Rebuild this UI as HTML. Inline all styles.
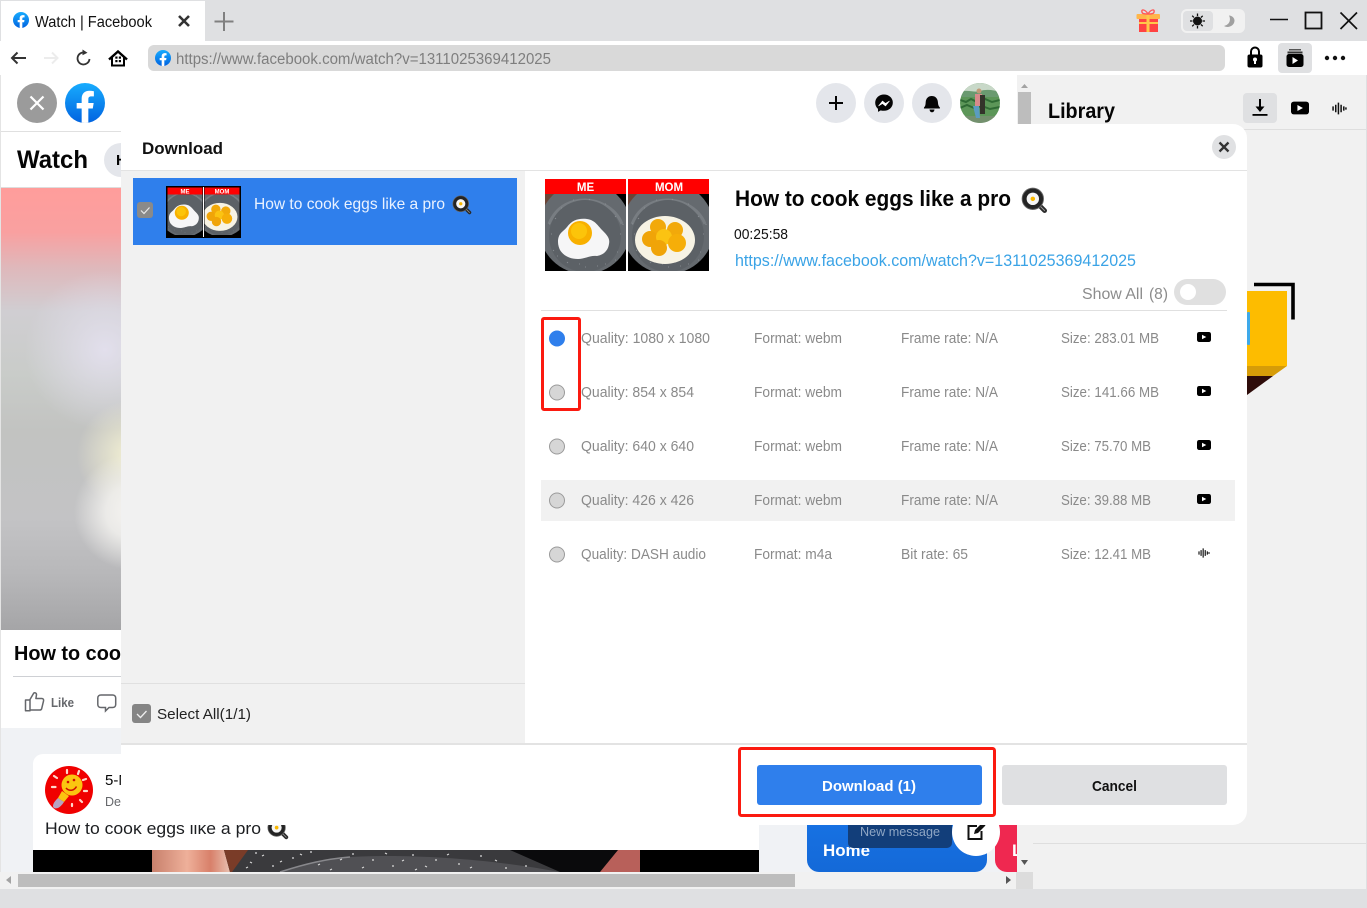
<!DOCTYPE html>
<html><head><meta charset="utf-8"><title>Watch | Facebook</title>
<style>
html,body{margin:0;padding:0;background:#fff;overflow:hidden}
svg{display:block;font-family:"Liberation Sans",sans-serif}
</style></head><body>
<svg xmlns="http://www.w3.org/2000/svg" width="1367" height="908" viewBox="0 0 1367 908">
<defs>
<linearGradient id="fb" x1="0" y1="0" x2="0" y2="1"><stop offset="0" stop-color="#18acfe"/><stop offset="1" stop-color="#0163e0"/></linearGradient>
<linearGradient id="vid" x1="0" y1="0" x2="0" y2="1">
<stop offset="0" stop-color="#ff9d9b"/><stop offset=".1" stop-color="#f9a0a0"/><stop offset=".18" stop-color="#dfb8bb"/><stop offset=".28" stop-color="#d0ced2"/><stop offset=".42" stop-color="#c9ccc9"/><stop offset=".55" stop-color="#c2c3c1"/><stop offset=".75" stop-color="#c3c3c5"/><stop offset=".87" stop-color="#b8b8ba"/><stop offset="1" stop-color="#a5a5a7"/>
</linearGradient>
<radialGradient id="lav" gradientUnits="userSpaceOnUse" cx="105" cy="350" r="80"><stop offset="0" stop-color="#e2dfec"/><stop offset="1" stop-color="#e2dfec" stop-opacity="0"/></radialGradient>
<radialGradient id="cream" gradientUnits="userSpaceOnUse" cx="132" cy="455" r="55"><stop offset="0" stop-color="#f5f2d4"/><stop offset="1" stop-color="#f5f2d4" stop-opacity="0"/></radialGradient>
<radialGradient id="whitish" gradientUnits="userSpaceOnUse" cx="132" cy="512" r="58"><stop offset="0" stop-color="#f6f4f1"/><stop offset=".45" stop-color="#f2f1ee" stop-opacity=".85"/><stop offset="1" stop-color="#f2f1ee" stop-opacity="0"/></radialGradient>
<linearGradient id="hand" x1="0" y1="0" x2="1" y2="0"><stop offset="0" stop-color="#c8806c"/><stop offset=".45" stop-color="#eeb09a"/><stop offset=".75" stop-color="#d8806a"/><stop offset="1" stop-color="#e8c0b0"/></linearGradient>
<linearGradient id="hbtn" x1="0" y1="0" x2="0" y2="1"><stop offset="0" stop-color="#1b7cf0"/><stop offset="1" stop-color="#1469d8"/></linearGradient>

<symbol id="pan" viewBox="0 0 24 24">
<path d="M15 15l6 6" stroke="#2a2a2a" stroke-width="4.200" stroke-linecap="round"/>
<path d="M17 17l4 4" stroke="#999" stroke-width=".8" stroke-linecap="round"/>
<circle cx="10.500" cy="10.500" r="9.500" fill="#242424" stroke="#666" stroke-width=".8"/>
<circle cx="10.500" cy="10.500" r="5.500" fill="#f6f6f6"/>
<circle cx="10.500" cy="10.500" r="2" fill="#f9b800"/>
</symbol>

<symbol id="play" viewBox="0 0 14 10">
<rect width="14" height="10" rx="2.200" fill="#000"/><path d="M5 2.700l4.300 2.300L5 7.300z" fill="#fff"/>
</symbol>

<symbol id="wave" viewBox="0 0 14 12">
<path d="M1 4v4M3.500 2.500v7M6 .5v11M8.500 2.500v7M11 4v4M13 5v2" stroke="#111" stroke-width="1.400" fill="none"/>
</symbol>

<symbol id="fblogo" viewBox="0 0 36 36">
<circle cx="18" cy="18" r="18" fill="url(#fb)"/>
<path d="M25 23l.8-5H21v-3.500c0-1.400.5-2.500 2.700-2.500H26V7.400c-1.300-.2-2.700-.4-4-.4-4.100 0-7 2.500-7 7v4h-4.500v5H15v12.700c1 .2 2 .3 3 .3s2-.1 3-.3V23h4z" fill="#fff"/>
</symbol>

<symbol id="specks" viewBox="0 0 81 77">
<path d="M6 40l1 0M10 24l1 1M8 56l1 1M16 14l1 0M28 6l1 0M44 5l1 1M60 10l1 0M70 22l1 1M75 40l1 0M72 58l1 0M60 70l1 0M40 73l1 0M22 68l1 1M12 62l1 0M70 66l1 0M4 30l1 0M78 30l0 1M34 70l1 0M52 72l1 0" stroke="#8f9499" stroke-width=".8" fill="none"/>
</symbol>

<symbol id="egg1" viewBox="0 0 81 77">
<rect width="81" height="77" fill="#000"/>
<path d="M0 0h16L0 12z" fill="#6b4436"/>
<circle cx="40" cy="34" r="46" fill="#656a6f"/>
<path d="M4 30c8-20 25-24 36-24s30 6 37 24" fill="none" stroke="#868b90" stroke-width="3" opacity=".6"/>
<circle cx="40" cy="42" r="36" fill="#5c6166"/>
<use href="#specks" width="81" height="77"/>
<path d="M13 48c0-9 5-10 9-15 5-7 12-9 20-8 8 1 11 7 16 12 5 5 7 8 6 13-1 7-6 11-12 12-7-1-12 3-19 3-9 0-15-4-18-9-1-2-2-5-2-8z" fill="#f6f6f7"/>
<circle cx="35" cy="39" r="12" fill="#f8b000"/>
<circle cx="34" cy="37" r="8" fill="#fcc40a"/>
</symbol>

<symbol id="egg2" viewBox="0 0 81 77">
<rect width="81" height="77" fill="#000"/>
<path d="M0 0h16L0 12z" fill="#6b4436"/>
<circle cx="40" cy="34" r="46" fill="#656a6f"/>
<path d="M4 30c8-20 25-24 36-24s30 6 37 24" fill="none" stroke="#868b90" stroke-width="3" opacity=".6"/>
<circle cx="40" cy="42" r="36" fill="#5c6166"/>
<use href="#specks" width="81" height="77"/>
<ellipse cx="37" cy="46" rx="30" ry="24" fill="#f7f3e4"/>
<circle cx="30" cy="33" r="8" fill="#f2a90a"/><circle cx="47" cy="36" r="8" fill="#f2a90a"/>
<circle cx="22" cy="45" r="8" fill="#f0a408"/><circle cx="36" cy="43" r="8" fill="#fbc312"/>
<circle cx="49" cy="49" r="9" fill="#f6ae08"/><circle cx="31" cy="54" r="8" fill="#f0a408"/>
</symbol>

<clipPath id="pageclip"><rect x="1" y="75" width="1016" height="797"/></clipPath>
<clipPath id="avclip"><circle cx="980" cy="103" r="20"/></clipPath>
</defs>

<!-- chrome -->
<rect width="1367" height="908" fill="#dfe0e2"/>
<rect x="1" y="1" width="204" height="40" fill="#fff"/>
<rect y="41" width="1367" height="34" fill="#fff"/>
<use href="#fblogo" x="13" y="12" width="16" height="16"/>
<text x="35" y="27" font-size="15.500" fill="#111" textLength="117" lengthAdjust="spacingAndGlyphs">Watch | Facebook</text>
<path d="M179 16l10 10M189 16l-10 10" stroke="#333" stroke-width="2.600"/>
<path d="M224 12v19M214.500 21.500h19" stroke="#808080" stroke-width="2"/>
<!-- nav icons -->
<path d="M26 58H12M17.500 52.500L12 58l5.500 5.500" fill="none" stroke="#333" stroke-width="2"/>
<path d="M57.500 58H44M52 52.500l5.500 5.500-5.500 5.500" fill="none" stroke="#ececec" stroke-width="2"/>
<path d="M85.500 52.800a6 6 0 1 0 4 6.200" fill="none" stroke="#333" stroke-width="1.800"/><path d="M82.500 49.500l5 3.300-5 2.500z" fill="#333"/>
<path d="M109 59.500l9-8 9 8" fill="none" stroke="#000" stroke-width="2.400"/>
<path d="M112 57.500V65.500h12v-8" fill="none" stroke="#000" stroke-width="2"/>
<rect x="115.300" y="56.500" width="2.200" height="2.200" fill="#000"/><rect x="118.800" y="56.500" width="2.200" height="2.200" fill="#000"/><rect x="115.300" y="60" width="2.200" height="2.200" fill="#000"/><rect x="118.800" y="60" width="2.200" height="2.200" fill="#000"/>
<rect x="148" y="45" width="1077" height="26" rx="6" fill="#d9d9d9"/>
<use href="#fblogo" x="155" y="50" width="16" height="16"/>
<text x="176" y="64" font-size="15.500" fill="#7e7e7e" textLength="375" lengthAdjust="spacingAndGlyphs">https://www.facebook.com/watch?v=1311025369412025</text>
<!-- gift -->
<rect x="1139" y="17" width="19" height="15" fill="#ff4343"/>
<rect x="1136.500" y="14" width="23.500" height="5" rx="1" fill="#ffb64a"/>
<rect x="1146.500" y="14" width="3" height="18" fill="#ffc84a"/>
<rect x="1139" y="22" width="19" height="2" fill="#ffc84a"/>
<path d="M1148 14c-3-5-7-5-6-2 0 2 3 2 6 2zM1148 14c3-5 7-5 6-2 0 2-3 2-6 2z" fill="none" stroke="#ff5a5a" stroke-width="1.400"/>
<!-- theme switch -->
<rect x="1181" y="9" width="64" height="24" rx="6" fill="#f1f1f1"/>
<rect x="1183" y="11" width="30" height="20" rx="4" fill="#dfe0e2"/>
<circle cx="1197.500" cy="21" r="4.500" fill="#111"/>
<path d="M1197.500 13.500v2.500M1197.500 26v2.500M1190 21h2.500M1202.500 21h2.500M1192.200 15.700l1.700 1.700M1201 24.500l1.700 1.700M1192.200 26.300l1.700-1.700M1201 17.500l1.700-1.700" stroke="#111" stroke-width="1.300"/>
<path d="M1229 15.500c2 4 1 9-5 10.500 4 2.500 10 0 10.500-5 .2-3-2.500-5.500-5.500-5.500z" fill="#a0a0a0"/>
<!-- window controls -->
<path d="M1270 19.500h18" stroke="#111" stroke-width="1.600"/>
<rect x="1305.500" y="12.500" width="16" height="16" fill="none" stroke="#111" stroke-width="1.800"/>
<path d="M1340.500 12.500l16.500 16.500M1357 12.500l-16.500 16.500" stroke="#111" stroke-width="1.700"/>
<!-- right toolbar -->
<path d="M1251 55v-3.500a4 4 0 0 1 8 0V55" fill="none" stroke="#000" stroke-width="2"/>
<rect x="1247.500" y="54.500" width="15" height="13" rx="2" fill="#000"/>
<circle cx="1255" cy="59.500" r="2" fill="#fff"/><rect x="1254" y="60" width="2" height="4" fill="#fff"/>
<rect x="1278" y="43" width="34" height="30" rx="4" fill="#dfe0e2"/>
<rect x="1289" y="49" width="12" height="1.500" fill="#555"/>
<rect x="1287.500" y="51.500" width="15" height="2" fill="#333"/>
<rect x="1286.500" y="54" width="17" height="13" rx="2.500" fill="#000"/>
<path d="M1292.500 57l5.500 3.500-5.500 3.500z" fill="#fff"/>
<circle cx="1327" cy="58" r="2.200" fill="#111"/><circle cx="1335" cy="58" r="2.200" fill="#111"/><circle cx="1343" cy="58" r="2.200" fill="#111"/>

<!-- page -->
<rect x="1" y="75" width="1016" height="797" fill="#fff"/>
<g clip-path="url(#pageclip)">
<rect x="1" y="131" width="1016" height="1" fill="#e0e0e0"/>
<circle cx="37" cy="103" r="20" fill="#9b9b9b"/>
<path d="M30.500 96.500l13 13M43.500 96.500l-13 13" stroke="#fff" stroke-width="2.200"/>
<use href="#fblogo" x="65" y="83" width="40" height="40"/>
<circle cx="836" cy="103" r="20" fill="#e4e6eb"/>
<path d="M836 96v14M829 103h14" stroke="#050505" stroke-width="2"/>
<circle cx="884" cy="103" r="20" fill="#e4e6eb"/>
<path d="M884 94.500c-5 0-8.800 3.600-8.800 8.300 0 2.500 1 4.600 2.800 6.100v3l2.800-1.500c1 .3 2 .4 3.200.4 5 0 8.800-3.600 8.800-8.200s-3.800-8.100-8.800-8.100z" fill="#050505"/>
<path d="M878.500 106l4-5 3 2.500 4-2.500-4 5-3-2.500z" fill="#fff" stroke="#fff" stroke-width=".6"/>
<circle cx="932" cy="103" r="20" fill="#e4e6eb"/>
<path d="M924 107.500c1.500-1.500 1.500-3 1.700-5.500.3-3.800 2.800-6 6-6 3.500 0 5.900 2.300 6.200 6 .2 2.500.5 4 2 5.500v1h-16z" fill="#050505"/><path d="M929.500 109.500h5c-.3 2-1.300 2.800-2.500 2.800s-2.200-.8-2.500-2.800z" fill="#050505"/>
<g clip-path="url(#avclip)">
<rect x="960" y="83" width="40" height="40" fill="#5c9658"/>
<rect x="960" y="83" width="40" height="9" fill="#c8d8c8"/>
<path d="M960 92c8-3 14 1 20-1s14-1 20 1v5h-40z" fill="#6a9a70"/>
<path d="M960 100l6 2 5-3 6 3 8-3 7 3 8-2M960 108l7-3 7 3 8-2 8 3 10-2" fill="none" stroke="#2f6a34" stroke-width="2"/>
<path d="M964 116h32v7h-32z" fill="#74906e"/>
<circle cx="979" cy="91" r="2.500" fill="#c09a78"/><rect x="975" y="94" width="7" height="12" fill="#d88a8a"/><rect x="980" y="95" width="5" height="19" fill="#33332a"/><path d="M973 106l3 12h4l-1-12z" fill="#5a9cc0"/>
</g>

<text x="17" y="168" font-size="25" font-weight="bold" fill="#050505" textLength="71" lengthAdjust="spacingAndGlyphs">Watch</text>
<rect x="104" y="143" width="60" height="34" rx="17" fill="#e4e6eb"/>
<text x="116" y="165" font-size="15" font-weight="bold" fill="#050505">H</text>
<rect x="1" y="187" width="120" height="1" fill="#ddd"/>
<rect x="1" y="188" width="120" height="442" fill="url(#vid)"/>
<rect x="1" y="188" width="120" height="442" fill="url(#lav)"/>
<rect x="1" y="188" width="120" height="442" fill="url(#cream)"/>
<rect x="1" y="188" width="120" height="442" fill="url(#whitish)"/>
<text x="14" y="660" font-size="20.500" font-weight="bold" fill="#050505" textLength="118" lengthAdjust="spacingAndGlyphs">How to cook</text>
<rect x="13" y="676" width="300" height="1" fill="#ced0d4"/>
<path d="M30 699.500l3.500-6c.6-1.200 3-1 3 1.200l-.6 3.800h5.800c1.600 0 2.200 1.200 1.800 2.600l-1.800 7.500c-.3 1-1 1.400-2 1.400H30zM25.500 700h4.500v10.800h-4.500z" fill="none" stroke="#65676b" stroke-width="1.500" stroke-linejoin="round"/>
<text x="51" y="707" font-size="12.500" font-weight="bold" fill="#65676b" textLength="23" lengthAdjust="spacingAndGlyphs">Like</text>
<path d="M101 695h11.500c2 0 3.200 1.200 3.200 3v6.500c0 1.800-1.200 3-3.200 3h-3.500l-3.500 3.500v-3.500h-4.500c-2 0-3.200-1.200-3.200-3V698c0-1.800 1.200-3 3.200-3z" fill="none" stroke="#65676b" stroke-width="1.500"/>
<rect x="1" y="728" width="1016" height="144" fill="#f0f2f5"/>
<path d="M33 872V764a10 10 0 0 1 10-10H759V872z" fill="#fff"/>
<circle cx="69" cy="790" r="24" fill="#f00000"/>
<g stroke="#ffd8cc" stroke-width="2.200" stroke-linecap="round"><path d="M52 787h3.500M54 776l3 2M67 770v3M79 771l-1 3M86 779l-3 1M87 791h-3M82 802l-2-2M72 806v-2"/></g>
<path d="M62 791l-4 7 6 4 5-6z" fill="#fbc510"/>
<circle cx="72" cy="785" r="10.500" fill="#fbc510"/>
<path d="M53 806c0-3 3-6 5-8l6 4c-2 3-4 5-6 6-3 1-5 0-5-2z" fill="#b7a3c0"/>
<path d="M66 788c3 3.500 8 3 10.500-1.500" fill="none" stroke="#d01000" stroke-width="1.500"/><circle cx="68" cy="782" r="1.300" fill="#d01000"/><circle cx="74" cy="780" r="1.300" fill="#d01000"/>
<text x="105" y="785" font-size="15" fill="#050505">5-Minute</text>
<text x="105" y="806" font-size="12.500" fill="#65676b">December</text>
<text x="45" y="834" font-size="17" fill="#1c1e21" textLength="216" lengthAdjust="spacingAndGlyphs">How to cook eggs like a pro</text>
<use href="#pan" x="267" y="818" width="22" height="22"/>
<rect x="33" y="850" width="726" height="22" fill="#000"/>
<rect x="152" y="850" width="488" height="22" fill="#0a0a0c"/>
<path d="M152 850h72l6 22h-78z" fill="url(#hand)"/>
<path d="M224 850h28l-18 22h-4z" fill="#7a3c28"/>
<path d="M232 872l16-22h262l50 22z" fill="#3a3a3d"/>
<path d="M280 872c25-8 45-13 70-15 50-3 130 0 210 15z" fill="#505054"/>
<path d="M280 872c25-8 45-13 70-15" fill="none" stroke="#88888c" stroke-width="1.600"/>
<path d="M600 872l18-22h22v22z" fill="#b8605a"/>
<path d="M246 868l2-1M262 856l2-1M280 862l2-1M300 854l2 1M318 865l2-1M340 860l2-1M362 868l2-1M385 853l2 1M402 861l2-1M425 866l2 1M447 855l2-1M470 868l2-1M495 860l2 1M250 862l2 1M330 870l2-1M415 870l2-1M255 853l2 0M272 866l2 0M292 858l2 0M310 852l2 0M352 854l2 0M372 860l2 0M392 866l2 0M412 855l2 0M435 860l2 0M458 864l2 0M480 856l2 0M505 868l2 0M525 866l2 0" stroke="#d8d8d8" stroke-width="1.200"/>
<!-- home cards -->
<path d="M807 760h180v100a12 12 0 0 1-12 12H819a12 12 0 0 1-12-12z" fill="url(#hbtn)"/>
<text x="823" y="856" font-size="17" font-weight="bold" fill="#fff" textLength="47" lengthAdjust="spacingAndGlyphs">Home</text>
<path d="M995 760h22v112h-10a12 12 0 0 1-12-12z" fill="#ef2850"/>
<text x="1012" y="856" font-size="17" font-weight="bold" fill="#fff">L</text>
<rect x="848" y="790" width="104" height="58" rx="5" fill="#123e7a"/>
<text x="860" y="836" font-size="13" fill="#8fa6c4" textLength="80" lengthAdjust="spacingAndGlyphs">New message</text>
<circle cx="976" cy="832" r="24" fill="#fff"/>
<path d="M977 826h-8.500v13h13v-8" fill="none" stroke="#111" stroke-width="2"/>
<path d="M974 834l1-4 7.500-7.500 3 3L978 833z" fill="#111"/>
</g>
<!-- page scrollbars -->
<rect x="0" y="872" width="1017" height="17" fill="#f1f1f1"/>
<rect x="18" y="874" width="777" height="13" fill="#bdbdbd"/>
<path d="M11 876v8l-5-4z" fill="#a3a3a3"/>
<path d="M1006 876v8l5-4z" fill="#555"/>
<!-- sidebar -->
<rect x="1017" y="75" width="350" height="814" fill="#f1f1f1"/>
<rect x="1366" y="75" width="1" height="814" fill="#dfe0e2"/>
<rect x="1016" y="872" width="17" height="17" fill="#dcdcdc"/>
<rect x="1018" y="92" width="13" height="60" fill="#bdbdbd"/>
<path d="M1021 88l3.500-4 3.500 4z" fill="#a3a3a3"/>
<path d="M1021 860l3.500 5 3.500-5z" fill="#555"/>
<text x="1048" y="118" font-size="21" font-weight="bold" fill="#050505" textLength="67" lengthAdjust="spacingAndGlyphs">Library</text>
<rect x="1243" y="93" width="34" height="30" rx="4" fill="#dfe0e2"/>
<path d="M1260 99v12" stroke="#000" stroke-width="2"/><path d="M1255.500 106.500l4.500 5.500 4.500-5.500z" fill="#000"/><rect x="1252.500" y="114" width="15" height="1.800" fill="#000"/>
<use href="#play" x="1291" y="101" width="18" height="14"/>
<use href="#wave" x="1332" y="102" width="15" height="13"/>
<rect x="1017" y="129" width="349" height="1" fill="#dedede"/>
<rect x="1033" y="843" width="333" height="1" fill="#dedede"/>
<rect x="1247" y="291" width="40" height="75" fill="#fdbc00"/>
<path d="M1247 366h40l-14 10h-26z" fill="#d69c08"/>
<path d="M1247 376h26l-26 19z" fill="#2e0c0a"/>
<rect x="1247" y="312" width="3" height="33" rx="1" fill="#3ea9ea"/>
<path d="M1254 284.500h39v35" fill="none" stroke="#000" stroke-width="3.600" stroke-linejoin="miter"/>

<!-- modal -->
<path d="M121 124H1233a14 14 0 0 1 14 14V811a14 14 0 0 1-14 14H121z" fill="#fff"/>
<rect x="121" y="170" width="1126" height="1" fill="#e3e3e3"/>
<rect x="121" y="171" width="404" height="572" fill="#f1f1f1"/>
<rect x="121" y="743" width="1126" height="2" fill="#e3e3e3"/>
<rect x="121" y="683" width="404" height="1" fill="#e0e0e0"/>
<text x="142" y="154" font-size="17" font-weight="bold" fill="#111" textLength="81" lengthAdjust="spacingAndGlyphs">Download</text>
<circle cx="1224" cy="147" r="12" fill="#e0e1e3"/>
<path d="M1219.500 142.500l9 9M1228.500 142.500l-9 9" stroke="#333" stroke-width="2.300"/>

<!-- list item -->
<rect x="133" y="178" width="384" height="67" fill="#2f7fec"/>
<rect x="137" y="202" width="16" height="16" rx="3" fill="#8a8a8a"/>
<path d="M141 210.500l3 3 5.500-6" fill="none" stroke="#e8e8e8" stroke-width="1.200"/>
<rect x="166" y="186" width="75" height="52" fill="#000"/>
<rect x="203" y="187" width="1" height="50" fill="#fff"/>
<svg x="167.500" y="190" width="35" height="45" viewBox="0 0 81 77" preserveAspectRatio="xMidYMid slice"><use href="#egg1" width="81" height="77"/></svg>
<svg x="204.500" y="190" width="35" height="45" viewBox="0 0 81 77" preserveAspectRatio="xMidYMid slice"><use href="#egg2" width="81" height="77"/></svg>
<rect x="167.500" y="187.500" width="35" height="7" fill="#f00"/>
<rect x="204.500" y="187.500" width="35" height="7" fill="#f00"/>
<text x="185" y="193.500" font-size="6" font-weight="bold" fill="#fff" text-anchor="middle">ME</text>
<text x="222" y="193.500" font-size="6" font-weight="bold" fill="#fff" text-anchor="middle">MOM</text>
<text x="254" y="209" font-size="16" fill="#eaf2ff" textLength="191" lengthAdjust="spacingAndGlyphs">How to cook eggs like a pro</text>
<use href="#pan" x="452" y="195" width="20" height="20"/>
<rect x="132" y="704" width="19" height="19" rx="3" fill="#858585"/>
<path d="M137 714l3.500 3.500 6-6.500" fill="none" stroke="#eee" stroke-width="1.300"/>
<text x="157" y="719" font-size="15" fill="#222" textLength="94" lengthAdjust="spacingAndGlyphs">Select All(1/1)</text>

<!-- detail header -->
<use href="#egg1" x="545" y="194" width="81" height="77"/>
<use href="#egg2" x="628" y="194" width="81" height="77"/>
<rect x="545" y="179" width="81" height="15" fill="#f00"/>
<rect x="628" y="179" width="81" height="15" fill="#f00"/>
<text x="585.500" y="191" font-size="11.500" font-weight="bold" fill="#fff" text-anchor="middle">ME</text>
<text x="669" y="191" font-size="11.500" font-weight="bold" fill="#fff" text-anchor="middle">MOM</text>
<text x="735" y="206" font-size="22" font-weight="bold" fill="#050505" textLength="276" lengthAdjust="spacingAndGlyphs">How to cook eggs like a pro</text>
<use href="#pan" x="1021" y="187" width="27" height="27"/>
<text x="734" y="239" font-size="15" fill="#111" textLength="54" lengthAdjust="spacingAndGlyphs">00:25:58</text>
<text x="735" y="266" font-size="16.500" fill="#3aa3e6" textLength="401" lengthAdjust="spacingAndGlyphs">https://www.facebook.com/watch?v=1311025369412025</text>
<text x="1082" y="299" font-size="16" fill="#8c8c8c" textLength="61" lengthAdjust="spacingAndGlyphs">Show All</text>
<text x="1149" y="299" font-size="16" fill="#8c8c8c" textLength="19" lengthAdjust="spacingAndGlyphs">(8)</text>
<rect x="1174" y="279" width="52" height="26" rx="13" fill="#e0e0e0"/>
<circle cx="1188" cy="292" r="8" fill="#fff"/>
<rect x="541" y="310" width="686" height="1" fill="#e0e0e0"/>

<!-- rows -->
<rect x="541" y="480" width="694" height="41" fill="#f1f1f1"/>
<g font-size="14.500" fill="#8a8a8a">
<text x="581" y="343" textLength="129" lengthAdjust="spacingAndGlyphs">Quality: 1080 x 1080</text>
<text x="754" y="343" textLength="88" lengthAdjust="spacingAndGlyphs">Format: webm</text>
<text x="901" y="343" textLength="97" lengthAdjust="spacingAndGlyphs">Frame rate: N/A</text>
<text x="1061" y="343" textLength="98" lengthAdjust="spacingAndGlyphs">Size: 283.01 MB</text>
<text x="581" y="397" textLength="113" lengthAdjust="spacingAndGlyphs">Quality: 854 x 854</text>
<text x="754" y="397" textLength="88" lengthAdjust="spacingAndGlyphs">Format: webm</text>
<text x="901" y="397" textLength="97" lengthAdjust="spacingAndGlyphs">Frame rate: N/A</text>
<text x="1061" y="397" textLength="98" lengthAdjust="spacingAndGlyphs">Size: 141.66 MB</text>
<text x="581" y="451" textLength="113" lengthAdjust="spacingAndGlyphs">Quality: 640 x 640</text>
<text x="754" y="451" textLength="88" lengthAdjust="spacingAndGlyphs">Format: webm</text>
<text x="901" y="451" textLength="97" lengthAdjust="spacingAndGlyphs">Frame rate: N/A</text>
<text x="1061" y="451" textLength="90" lengthAdjust="spacingAndGlyphs">Size: 75.70 MB</text>
<text x="581" y="505" textLength="113" lengthAdjust="spacingAndGlyphs">Quality: 426 x 426</text>
<text x="754" y="505" textLength="88" lengthAdjust="spacingAndGlyphs">Format: webm</text>
<text x="901" y="505" textLength="97" lengthAdjust="spacingAndGlyphs">Frame rate: N/A</text>
<text x="1061" y="505" textLength="90" lengthAdjust="spacingAndGlyphs">Size: 39.88 MB</text>
<text x="581" y="559" textLength="125" lengthAdjust="spacingAndGlyphs">Quality: DASH audio</text>
<text x="754" y="559" textLength="78" lengthAdjust="spacingAndGlyphs">Format: m4a</text>
<text x="901" y="559" textLength="67" lengthAdjust="spacingAndGlyphs">Bit rate: 65</text>
<text x="1061" y="559" textLength="90" lengthAdjust="spacingAndGlyphs">Size: 12.41 MB</text>
</g>
<circle cx="557" cy="338.500" r="8" fill="#2f7fec"/>
<g fill="#d6d6d6" stroke="#9a9a9a" stroke-width="1"><circle cx="557" cy="392.500" r="7.500"/><circle cx="557" cy="446.500" r="7.500"/><circle cx="557" cy="500.500" r="7.500"/><circle cx="557" cy="554.500" r="7.500"/></g>
<use href="#play" x="1197" y="332" width="14" height="10"/>
<use href="#play" x="1197" y="386" width="14" height="10"/>
<use href="#play" x="1197" y="440" width="14" height="10"/>
<use href="#play" x="1197" y="494" width="14" height="10"/>
<use href="#wave" x="1198" y="548" width="12" height="10"/>
<rect x="542.500" y="318.500" width="37" height="91" rx="1.500" fill="none" stroke="#fb1a10" stroke-width="3"/>

<!-- footer buttons -->
<rect x="739.500" y="748.500" width="255" height="67" rx="2" fill="none" stroke="#fb1a10" stroke-width="3"/>
<rect x="757" y="765" width="225" height="40" rx="3" fill="#2f7fec"/>
<text x="822" y="791" font-size="15" font-weight="bold" fill="#fff" textLength="94" lengthAdjust="spacingAndGlyphs">Download (1)</text>
<rect x="1002" y="765" width="225" height="40" rx="3" fill="#dfe0e2"/>
<text x="1092" y="791" font-size="15" font-weight="bold" fill="#111" textLength="45" lengthAdjust="spacingAndGlyphs">Cancel</text>
<!-- left window edge -->
<rect x="0" y="75" width="1" height="797" fill="#e4e4e4"/>
</svg>
</body></html>
